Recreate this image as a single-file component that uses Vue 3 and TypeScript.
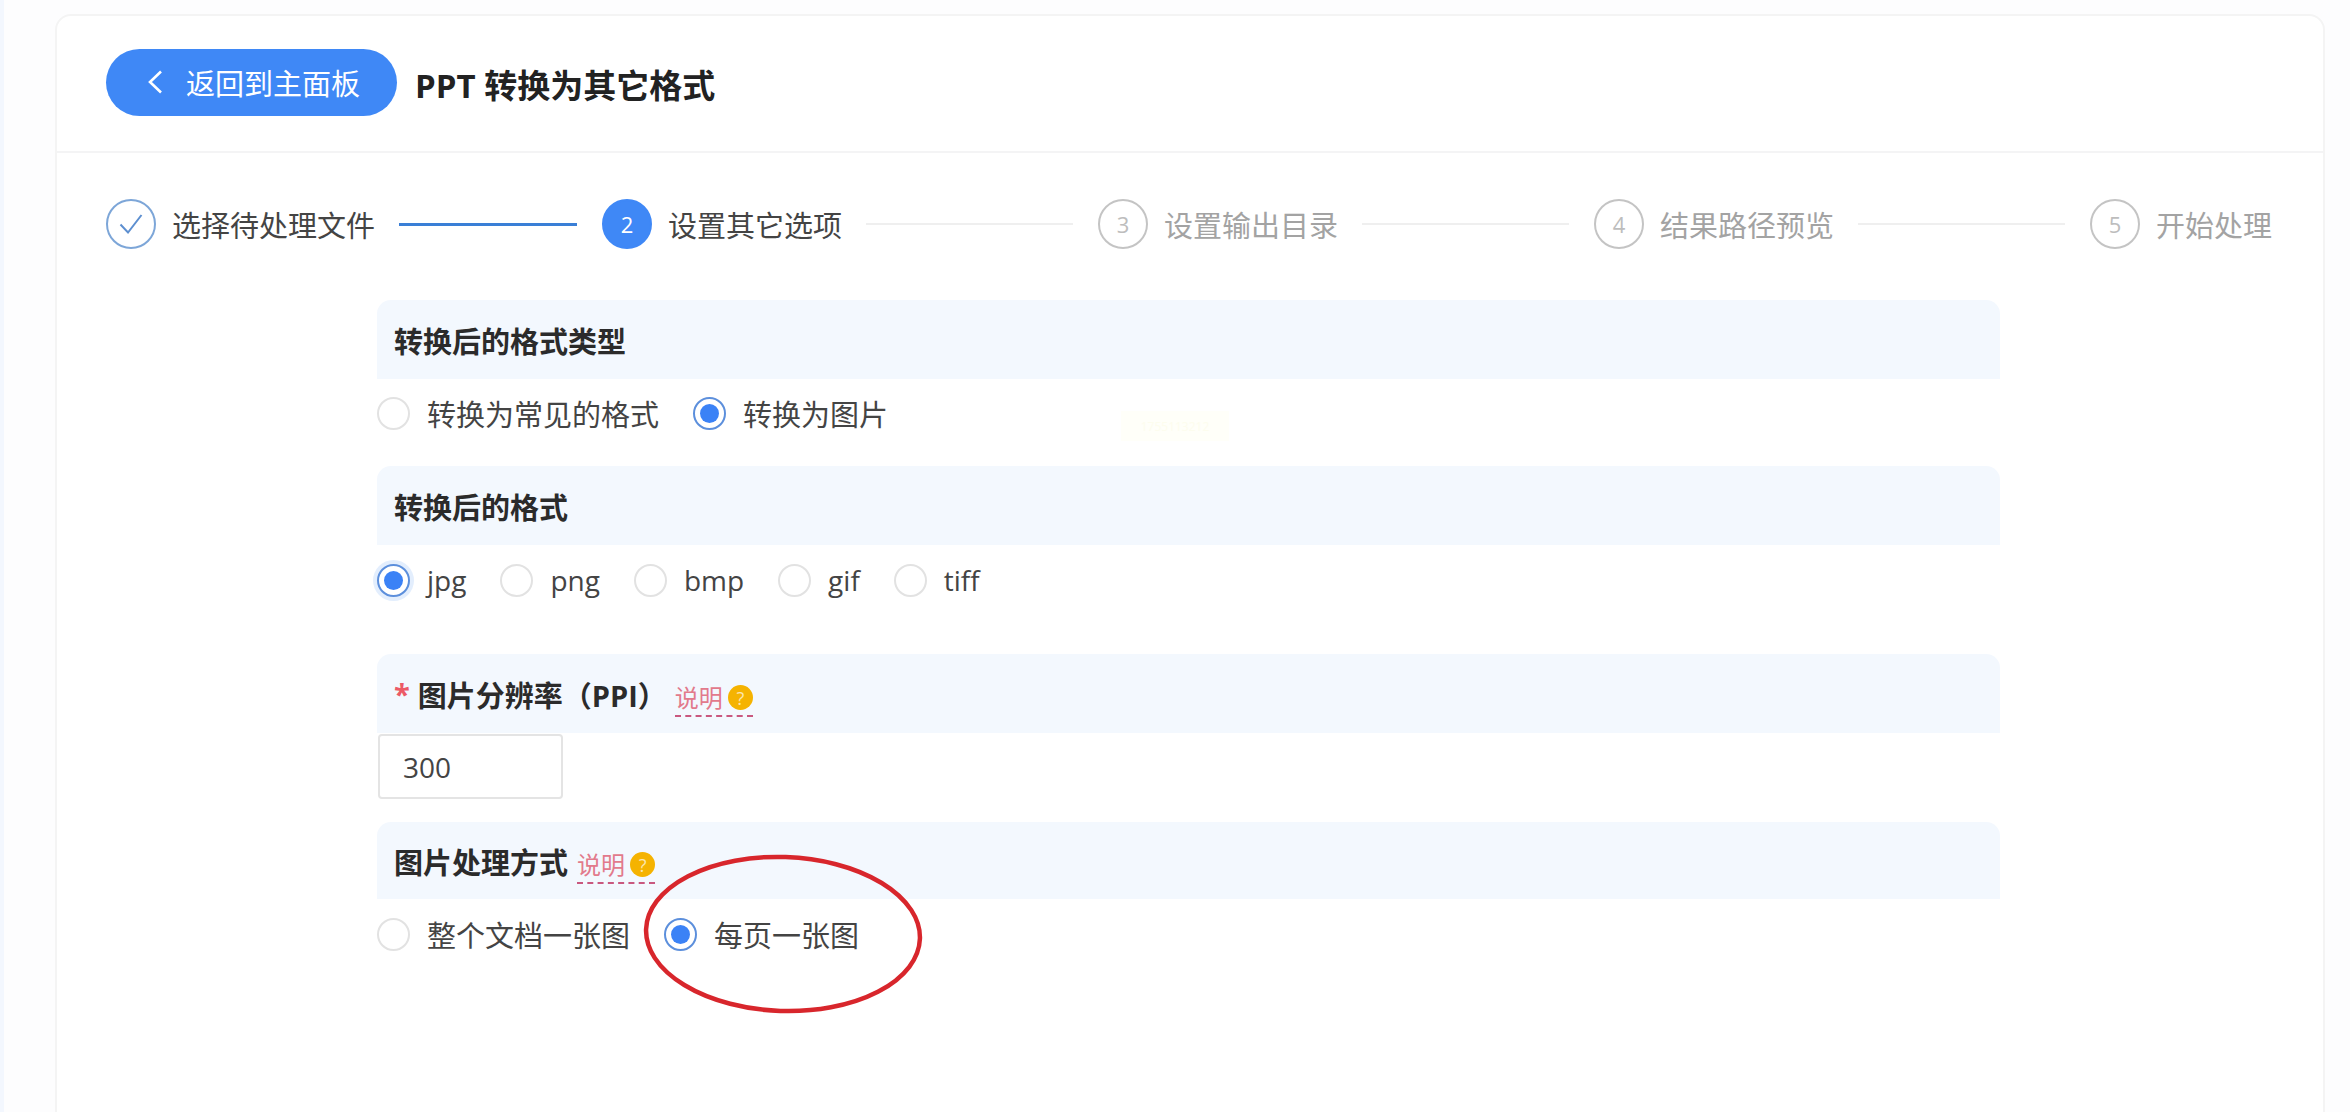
<template>
  <div class="page">
    <div class="card">
      <!-- Header -->
      <div class="card-header">
        <button class="back-btn" type="button">
          <svg class="back-icon" width="19" height="24" viewBox="0 0 19 24" fill="none">
            <path d="M15 1.5 4 12l11 10.5" stroke="#fff" stroke-width="2.6" />
          </svg>
          <span>返回到主面板</span>
        </button>
        <h1 class="title">PPT 转换为其它格式</h1>
      </div>

      <div class="card-body">
        <!-- Steps -->
        <div class="steps">
          <div v-for="(step, i) in steps" :key="step" class="step" :class="stepClass(i)">
            <span class="step-circle">
              <svg v-if="i === 0" width="26" height="22" viewBox="0 0 26 22" fill="none">
                <path d="M2.5 11.5 10 19.5 23.5 2" stroke="#5d8fd0" stroke-width="2" />
              </svg>
              <template v-else>{{ i + 1 }}</template>
            </span>
            <span class="step-title">{{ step }}</span>
            <span v-if="i < steps.length - 1" class="step-line"></span>
          </div>
        </div>

        <!-- Form -->
        <div class="form">
          <section class="group group-type">
            <div class="band">转换后的格式类型</div>
            <div class="options">
              <label v-for="opt in typeOptions" :key="opt" class="radio" :class="{ checked: opt === '转换为图片' }">
                <span class="dot"></span>{{ opt }}
              </label>
            </div>
          </section>

          <section class="group group-format">
            <div class="band">转换后的格式</div>
            <div class="options">
              <label
                v-for="opt in formatOptions"
                :key="opt"
                class="radio"
                :class="{ checked: opt === 'jpg', focused: opt === 'jpg' }"
              >
                <span class="dot"></span>{{ opt }}
              </label>
            </div>
          </section>

          <section class="group group-ppi">
            <div class="band">
              <span class="required">*</span>
              <span>图片分辨率（PPI）</span>
              <span class="hint hint-wide">说明<span class="hint-icon">?</span></span>
            </div>
            <input class="num-input" type="text" value="300" />
          </section>

          <section class="group group-mode">
            <div class="band band-short">
              <span>图片处理方式</span>
              <span class="hint">说明<span class="hint-icon">?</span></span>
            </div>
            <div class="options">
              <label v-for="opt in modeOptions" :key="opt" class="radio" :class="{ checked: opt === '每页一张图' }">
                <span class="dot"></span>{{ opt }}
              </label>
            </div>
          </section>
        </div>
      </div>

      <!-- Faint watermark left on the page -->
      <div class="watermark">1755113212</div>

      <!-- Red annotation drawn over the screenshot -->
      <svg class="annotation" width="284" height="164" viewBox="0 0 284 164" fill="none">
        <ellipse cx="142" cy="82" rx="137" ry="77" transform="rotate(2 142 82)" stroke="#d8262c" stroke-width="4.5" />
      </svg>
    </div>
  </div>
</template>

<script setup lang="ts">
const steps: string[] = ['选择待处理文件', '设置其它选项', '设置输出目录', '结果路径预览', '开始处理']
const typeOptions: string[] = ['转换为常见的格式', '转换为图片']
const formatOptions: string[] = ['jpg', 'png', 'bmp', 'gif', 'tiff']
const modeOptions: string[] = ['整个文档一张图', '每页一张图']

const current = 1

const stepClass = (i: number) => ({
  done: i < current,
  active: i === current,
  waiting: i > current
})
</script>

<style>
html,
body {
  margin: 0;
  background: #fdfdfe;
}
</style>

<style scoped>
.page {
  box-sizing: border-box;
  width: 2350px;
  height: 1112px;
  overflow: hidden;
  padding: 14px 25px 0 51px;
  border-left: 4px solid #f3f7fe;
  font-family: "Open Sans", "Noto Sans CJK SC", sans-serif;
  color: #333;
}

.card {
  position: relative;
  box-sizing: border-box;
  height: 1200px;
  background: #fff;
  border: 2px solid #f4f4f4;
  border-radius: 16px;
}

.card-header {
  display: flex;
  align-items: center;
  gap: 18px;
  height: 137px;
  padding: 0 49px;
  box-sizing: border-box;
  border-bottom: 2px solid #f4f4f5;
}

.back-btn {
  display: flex;
  align-items: center;
  gap: 21px;
  width: 291px;
  height: 67px;
  padding: 0 0 0 40px;
  box-sizing: border-box;
  margin-top: -3px;
  border: none;
  border-radius: 34px;
  background: #3f88f6;
  color: #fff;
  font-family: inherit;
  font-size: 29px;
  white-space: nowrap;
}

.back-icon {
  flex: none;
}

.title {
  margin: 0;
  font-size: 33px;
  font-weight: 700;
  color: #222;
  white-space: nowrap;
}

.card-body {
  padding: 46px 51px 0 49px;
}

.steps {
  display: flex;
  align-items: center;
}

.step {
  display: flex;
  flex: 1 1 0;
  align-items: center;
  font-size: 29px;
}

.step:last-child {
  flex: none;
}

.step-circle {
  display: flex;
  flex: none;
  align-items: center;
  justify-content: center;
  box-sizing: border-box;
  width: 50px;
  height: 50px;
  margin-right: 16px;
  border: 2px solid #c4c4c4;
  border-radius: 50%;
  font-size: 22px;
  color: #bdbdbd;
}

.step-title {
  color: #a3a3a3;
  white-space: nowrap;
}

.step-line {
  flex: 1;
  height: 2px;
  margin: 0 25px 0 24px;
  background: #efefef;
}

.done .step-circle {
  border-color: #7da6d8;
}

.done .step-title,
.active .step-title {
  color: #444;
}

.done .step-line {
  height: 3px;
  background: #3a7fd6;
}

.active .step-circle {
  border-color: #3f88f6;
  background: #3f88f6;
  color: #fff;
}

.form {
  width: 1623px;
  margin: 51px 0 0 271px;
}

.band {
  display: flex;
  align-items: center;
  height: 79px;
  padding: 0 17px;
  box-sizing: border-box;
  border-radius: 14px 14px 0 0;
  background: #f3f8fe;
  font-size: 29px;
  font-weight: 700;
  color: #2b2b2b;
}

.band-short {
  height: 77px;
}

.options {
  display: flex;
  align-items: center;
  gap: 34px;
  height: 68px;
}

.group-format .options {
  height: 70px;
}

.group-format .radio {
  font-size: 28px;
}

.group-mode .options {
  height: 70px;
}

.group-type {
  margin-bottom: 19px;
}

.group-format {
  margin-bottom: 39px;
}

.group-ppi {
  margin-bottom: 23px;
}

.radio {
  display: flex;
  align-items: center;
  gap: 17px;
  font-size: 29px;
  color: #444;
  white-space: nowrap;
}

.dot {
  display: flex;
  flex: none;
  align-items: center;
  justify-content: center;
  box-sizing: border-box;
  width: 33px;
  height: 33px;
  border: 2px solid #e2e2e2;
  border-radius: 50%;
  background: #fff;
}

.checked .dot {
  border-color: #5c8fdc;
}

.checked .dot::after {
  content: "";
  width: 19px;
  height: 19px;
  border-radius: 50%;
  background: #3b82f6;
}

.focused .dot {
  box-shadow: 0 0 0 4px #e3eefd;
}

.required {
  margin-right: 8px;
  font-size: 29px;
  font-weight: 700;
  color: #ec5a66;
}

.hint {
  display: flex;
  align-items: center;
  gap: 5px;
  margin: 12px 0 0 9px;
  padding-bottom: 2px;
  border-bottom: 2px dashed #c9587f;
  font-size: 24px;
  font-weight: 400;
  line-height: 30px;
  color: #e27a8c;
}

.hint-wide {
  margin-left: 8px;
}

.hint-icon {
  display: flex;
  align-items: center;
  justify-content: center;
  width: 25px;
  height: 25px;
  border-radius: 50%;
  background: #f5b301;
  font-size: 18px;
  font-weight: 400;
  color: #fbe6b0;
}

.num-input {
  display: block;
  box-sizing: border-box;
  width: 185px;
  height: 65px;
  margin: 1px 0 0 1px;
  padding: 0 23px;
  border: 2px solid #e4e4e4;
  border-radius: 4px;
  background: #fff;
  font-family: inherit;
  font-size: 28px;
  color: #444;
  outline: none;
}

.watermark {
  position: absolute;
  left: 1064px;
  top: 395px;
  display: flex;
  align-items: center;
  justify-content: center;
  width: 108px;
  height: 30px;
  background: #fffff9;
  font-size: 12px;
  color: #fdfdee;
}

.annotation {
  position: absolute;
  left: 584px;
  top: 836px;
  pointer-events: none;
}
</style>
